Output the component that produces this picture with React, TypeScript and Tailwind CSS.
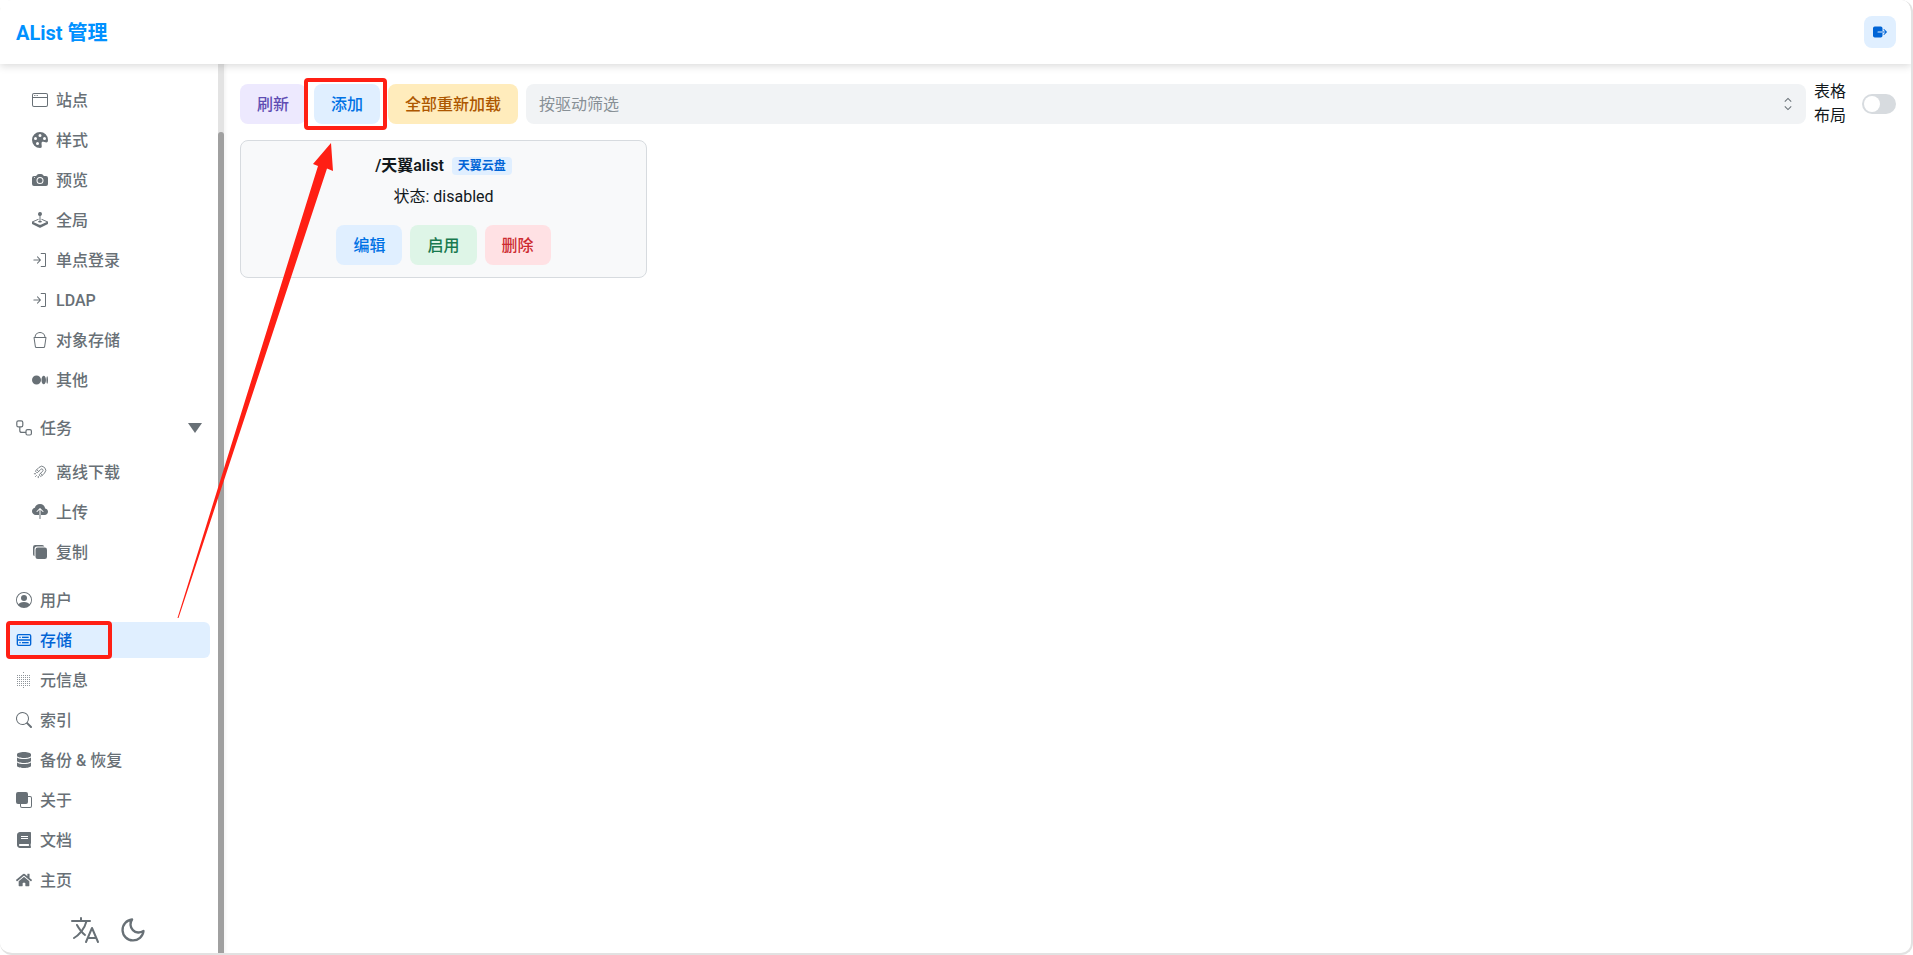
import type { ReactNode } from "react";
import {
  BsBucket,
  BsCameraFill,
  BsCloudUploadFill,
  BsFront,
  BsJoystick,
  BsMedium,
  BsPaletteFill,
  BsPersonCircle,
  BsSearch,
  BsWindow,
} from "react-icons/bs";
import { CgDatabase } from "react-icons/cg";
import { FaBook, FaDatabase, FaHome } from "react-icons/fa";
import { FiMoon } from "react-icons/fi";
import { GoSignIn } from "react-icons/go";
import { IoCopy, IoExit, IoLanguageOutline, IoMagnetOutline } from "react-icons/io5";

const font = "font-['Roboto','Noto_Sans_CJK_SC',sans-serif]";

function MetaIcon() {
  const cols = [1, 3, 5, 7, 9, 11, 13];
  const rows = [3, 5, 7, 9, 11, 13];
  return (
    <svg viewBox="0 0 16 16" className="h-4 w-4 fill-[#8f959a]">
      {cols.map((x) => rows.map((y) => <rect key={`${x}-${y}`} x={x} y={y} width="1" height="1" />))}
      <path d="M7 0h1v1H7zM7 15h1v1H7z" />
    </svg>
  );
}

function WorkflowIcon() {
  return (
    <svg viewBox="0 0 16 16" className="h-4 w-4 fill-none stroke-current stroke-[1.2]">
      <rect x="0.8" y="0.8" width="6" height="6" rx="1.6" />
      <rect x="10" y="9.6" width="5.4" height="5.4" rx="1.5" />
      <path d="M3.8 7v3.4a2 2 0 0 0 2 2H10" />
    </svg>
  );
}

function NavRow({
  icon,
  label,
  sub,
  active,
  children,
}: {
  icon: ReactNode;
  label: string;
  sub?: boolean;
  active?: boolean;
  children?: ReactNode;
}) {
  return (
    <div
      className={`flex h-9 items-center rounded-md pr-2 text-base font-medium ${
        sub ? "pl-6" : "pl-2"
      } ${active ? "bg-[#e0efff] text-[#0064d6]" : "text-[#687076]"}`}
    >
      <span className="mr-2 flex h-4 w-4 shrink-0 items-center justify-center text-base">{icon}</span>
      <span className="flex-1 pt-px">{label}</span>
      {children}
    </div>
  );
}

function Btn({ className, children }: { className: string; children: ReactNode }) {
  return (
    <button className={`h-10 shrink-0 rounded-lg px-[17px] pt-px text-base font-medium ${className}`}>{children}</button>
  );
}

function Sidebar() {
  return (
    <aside className="relative flex w-56 shrink-0 flex-col overflow-hidden pt-[18px] pl-2 pr-[14px]">
      <div className="flex flex-col gap-1">
        <NavRow sub icon={<BsWindow />} label="站点" />
        <NavRow sub icon={<BsPaletteFill />} label="样式" />
        <NavRow sub icon={<BsCameraFill />} label="预览" />
        <NavRow sub icon={<BsJoystick />} label="全局" />
        <NavRow sub icon={<GoSignIn className="-scale-x-100" />} label="单点登录" />
        <NavRow sub icon={<GoSignIn className="-scale-x-100" />} label="LDAP" />
        <NavRow sub icon={<BsBucket />} label="对象存储" />
        <NavRow sub icon={<BsMedium />} label="其他" />
      </div>
      <div className="mt-3">
        <NavRow icon={<WorkflowIcon />} label="任务">
          <svg viewBox="0 0 14 10" className="h-2.5 w-3.5 fill-[#687076]">
            <path d="M0 0h14L7 10z" />
          </svg>
        </NavRow>
      </div>
      <div className="mt-2 flex flex-col gap-1">
        <NavRow sub icon={<IoMagnetOutline className="h-3.5 w-3.5" />} label="离线下载" />
        <NavRow sub icon={<BsCloudUploadFill />} label="上传" />
        <NavRow sub icon={<IoCopy />} label="复制" />
      </div>
      <div className="mt-3 flex flex-col gap-1">
        <NavRow icon={<BsPersonCircle />} label="用户" />
        <NavRow active icon={<CgDatabase />} label="存储" />
        <NavRow icon={<MetaIcon />} label="元信息" />
        <NavRow icon={<BsSearch />} label="索引" />
        <NavRow icon={<FaDatabase />} label="备份 & 恢复" />
        <NavRow icon={<BsFront />} label="关于" />
        <NavRow icon={<FaBook />} label="文档" />
        <NavRow icon={<FaHome />} label="主页" />
      </div>
      <div className="mt-4 flex items-center justify-center gap-[18px] pr-0.5 text-[#687076]">
        <IoLanguageOutline className="h-8 w-8" />
        <FiMoon className="h-7 w-7" />
      </div>
      {/* scrollbar */}
      <div className="absolute inset-y-0 right-0 flex w-1.5 flex-col bg-[#e3e3e3]">
        <div className="mt-[68px] flex-1 rounded-t-sm bg-[#a0a0a0]" />
      </div>
    </aside>
  );
}

function Toolbar() {
  return (
    <div className="flex h-12 items-center gap-2">
      <Btn className="bg-[#ede9fe] text-[#5f4db3]">刷新</Btn>
      <Btn className="bg-[#e0efff] text-[#0072e5]">添加</Btn>
      <Btn className="bg-[#ffecbc] text-[#ad5700]">全部重新加载</Btn>
      <div className="flex h-10 flex-1 items-center justify-between rounded-lg bg-[#f1f3f5] pl-[13px] pr-3 text-base text-[#889096]">
        <span className="pt-px">按驱动筛选</span>
        <svg viewBox="0 0 12 20" className="h-4 w-3 fill-none stroke-[#687076] stroke-[1.3]">
          <path d="M2 7l4-4 4 4M2 13l4 4 4-4" />
        </svg>
      </div>
      <div className="flex shrink-0 items-center">
        <span className="w-9 text-base leading-6 text-[#11181c]">表格布局</span>
        <span className="ml-3 flex h-5 w-[34px] items-center rounded-full bg-[#d7dbdf] pl-0.5">
          <span className="h-4 w-4 rounded-full bg-white" />
        </span>
      </div>
    </div>
  );
}

function StorageCard() {
  return (
    <div className="mt-3 flex h-[138px] w-[407px] flex-col items-center rounded-lg border border-[#d7dbdf] bg-[#f8f9fa] pt-[15px]">
      <div className="flex h-5 items-center gap-2 text-[#11181c]">
        <span className="text-base font-semibold">/天翼alist</span>
        <span className="rounded bg-[#e0efff] px-[6px] text-xs font-bold leading-[18px] text-[#0064d6]">天翼云盘</span>
      </div>
      <p className="mt-[11px] text-base leading-5 text-[#11181c]">状态: disabled</p>
      <div className="mt-[18px] flex gap-2">
        <Btn className="bg-[#e0efff] text-[#0072e5]">编辑</Btn>
        <Btn className="bg-[#def5e7] text-[#18794e]">启用</Btn>
        <Btn className="bg-[#ffe1e4] text-[#cd2b31]">删除</Btn>
      </div>
    </div>
  );
}

export default function App() {
  return (
    <div className={`relative h-[955px] w-[1913px] overflow-hidden bg-white ${font}`}>
      <div className="flex h-full flex-col overflow-hidden rounded-xl border-r-2 border-b-2 border-[#e2e2e2] bg-white">
        <header className="relative z-10 flex h-16 shrink-0 items-center justify-between bg-white pl-4 pr-[15px] shadow-[0_2px_8px_rgba(0,0,0,0.15)]">
          <span className="pt-px text-xl font-bold text-[#0091ff]">AList 管理</span>
          <span className="flex h-8 w-8 items-center justify-center rounded-lg bg-[#e0efff] text-base text-[#0064d6]">
            <IoExit />
          </span>
        </header>
        <div className="flex flex-1 overflow-hidden">
          <Sidebar />
          <main className="flex-1 pt-4 pl-4 pr-[15px] shadow-[inset_4px_0_4px_-3px_rgba(0,0,0,0.06)]">
            <Toolbar />
            <StorageCard />
          </main>
        </div>
      </div>

      {/* annotations drawn over the screenshot */}
      <div className="absolute left-[304px] top-[78px] h-[52px] w-[83px] rounded-sm border-4 border-[#ff1f14]" />
      <div className="absolute left-[6px] top-[621px] h-[38px] w-[106px] rounded-sm border-4 border-[#ff1f14]" />
      <svg className="pointer-events-none absolute inset-0 h-[955px] w-[1913px]" viewBox="0 0 1913 955">
        <path d="M177.5 618 L318 166 L313 164 L331 143 L333 171 L327 168.5 L178.5 618 Z" fill="#ff1f14" />
      </svg>
    </div>
  );
}
